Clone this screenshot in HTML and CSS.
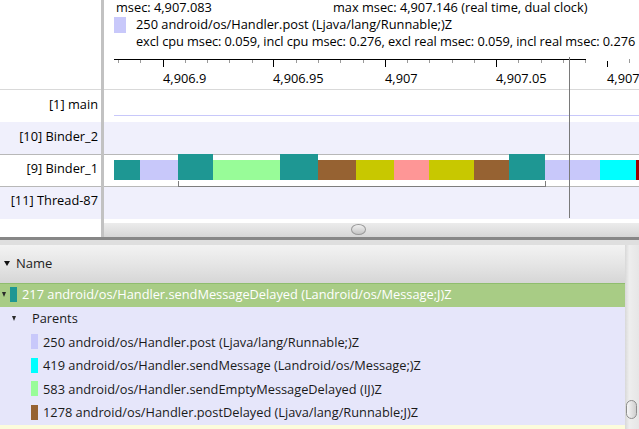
FILE: index.html
```html
<!DOCTYPE html>
<html>
<head>
<meta charset="utf-8">
<title>Traceview</title>
<link rel="stylesheet" href="styles.css">
</head>
<body>
<div class="app">
  <div class="top">
    <div class="labels">
      <div class="head"></div>
      <div class="row r1 lab">[1] main</div>
      <div class="row r2 lab">[10] Binder_2</div>
      <div class="row r3 lab">[9] Binder_1</div>
      <div class="row r4 lab">[11] Thread-87</div>
    </div>
    <div class="timeline">
      <div class="head">
        <div class="info">
          <div class="line"><span class="cur">msec: 4,907.083</span><span>max msec: 4,907.146 (real time, dual clock)</span></div>
          <div class="line"><span class="sw-big"></span><span>250 android/os/Handler.post (Ljava/lang/Runnable;)Z</span></div>
          <div class="line indent">excl cpu msec: 0.059, incl cpu msec: 0.276, excl real msec: 0.059, incl real msec: 0.276</div>
        </div>
        <svg class="axis" width="535" height="40" viewBox="0 0 535 40">
          <path class="minor" d="M14.5 8V12M36.5 8V12M81.5 8V12M103.5 8V12M125.5 8V12M148.5 8V12M192.5 8V12M214.5 8V12M236.5 8V12M259.5 8V12M303.5 8V12M325.5 8V12M348.5 8V12M370.5 8V12M414.5 8V12M437.5 8V12M459.5 8V12M481.5 8V12M525.5 8V12"/>
          <path class="major" d="M10 8.5H482M59.5 8V16M169.5 8V16M281.5 8V16M392.5 8V16M503.5 10V16"/>
          <text x="59" y="31.5">4,906.9</text>
          <text x="169" y="31.5">4,906.95</text>
          <text x="281" y="31.5">4,907</text>
          <text x="392" y="31.5">4,907.05</text>
          <text x="503" y="31.5">4,907.1</text>
        </svg>
      </div>
      <div class="row r1 track"><div class="thin"></div></div>
      <div class="row r2 track"></div>
      <div class="row r3 track">
        <div class="bars">
          <div class="bar c-teal" style="width:26px"></div>
          <div class="bar c-lav" style="width:38px"></div>
          <div class="bar c-teal tall" style="width:35px"></div>
          <div class="bar c-green" style="width:67px"></div>
          <div class="bar c-teal tall" style="width:38px"></div>
          <div class="bar c-brown" style="width:38px"></div>
          <div class="bar c-olive" style="width:38px"></div>
          <div class="bar c-pink" style="width:35px"></div>
          <div class="bar c-olive" style="width:45px"></div>
          <div class="bar c-brown" style="width:35px"></div>
          <div class="bar c-teal tall" style="width:36px"></div>
          <div class="bar c-lav" style="width:55px"></div>
          <div class="bar c-cyan" style="width:36px"></div>
          <div class="bar c-red" style="width:20px"></div>
        </div>
      </div>
      <div class="row r4 track"></div>
      <div class="gap"></div>
      <div class="hscroll"><div class="hthumb"></div></div>
      <div class="bracket"></div>
      <div class="cursor"></div>
    </div>
  </div>
  <div class="sash"></div>
  <div class="bottom">
    <div class="tree">
      <div class="colhead"><span class="tri big"></span><span>Name</span></div>
      <div class="sel"><span class="tri"></span><span class="sw c-teal"></span><span>217 android/os/Handler.sendMessageDelayed (Landroid/os/Message;J)Z</span></div>
      <div class="item parents"><span class="tri"></span><span>Parents</span></div>
      <div class="item child"><span class="sw c-lav"></span><span>250 android/os/Handler.post (Ljava/lang/Runnable;)Z</span></div>
      <div class="item child"><span class="sw c-cyan"></span><span>419 android/os/Handler.sendMessage (Landroid/os/Message;)Z</span></div>
      <div class="item child"><span class="sw c-green"></span><span>583 android/os/Handler.sendEmptyMessageDelayed (IJ)Z</span></div>
      <div class="item child"><span class="sw c-brown"></span><span>1278 android/os/Handler.postDelayed (Ljava/lang/Runnable;J)Z</span></div>
      <div class="item yellow"></div>
    </div>
    <div class="vscroll"><div class="vthumb"></div></div>
  </div>
</div>
</body>
</html>
```

FILE: styles.css
```css
html, body {
  margin: 0;
  padding: 0;
  overflow: hidden;
}
body {
  width: 639px;
  height: 429px;
  font-family: "Open Sans", "Noto Sans", sans-serif;
  font-size: 12.8px;
  color: #000;
  background: #fff;
}
.app {
  display: flex;
  flex-direction: column;
  height: 429px;
}
.top {
  display: flex;
  height: 237px;
  flex: none;
}
.labels {
  width: 101px;
  flex: none;
  border-right: 3px solid #c2c2c2;
  background: #fff;
}
.timeline {
  flex: 1;
  min-width: 0;
  position: relative;
  display: flex;
  flex-direction: column;
  overflow: hidden;
}
.head {
  height: 89px;
  border-bottom: 1px solid #d9d9d9;
  flex: none;
  display: flex;
  flex-direction: column;
}
.info {
  margin-top: -1.3px;
  padding-left: 12px;
  line-height: 17.3px;
  white-space: nowrap;
}
.line {
  display: flex;
  align-items: center;
  height: 17.3px;
}
.line .cur {
  width: 217px;
  flex: none;
}
.sw-big {
  width: 12px;
  height: 16px;
  margin-left: -2px;
  margin-right: 10px;
  background: #c8c8fa;
  flex: none;
}
.line.indent {
  padding-left: 20px;
  letter-spacing: -0.07px;
}
.axis {
  display: block;
  margin-top: auto;
  flex: none;
}
.axis .minor {
  stroke: #9a9a9a;
  stroke-width: 1;
  fill: none;
}
.axis .major {
  stroke: #000;
  stroke-width: 1;
  fill: none;
}
.axis text {
  font-family: "Open Sans", "Noto Sans", sans-serif;
  font-size: 12.8px;
  fill: #000;
}
.row {
  height: 32px;
  box-sizing: border-box;
  flex: none;
}
.r2 {
  background: #f0f0fc;
}
.r3 {
  border-top: 1px solid #b8b8b8;
}
.r4 {
  height: 33px;
  border-top: 1px solid #b8b8b8;
  background: #f0f0fc;
}
.lab {
  text-align: right;
  padding-right: 3px;
  line-height: 28px;
  white-space: nowrap;
}
.lab.r3, .lab.r4 {
  line-height: 26px;
}
.thin {
  margin: 25px 0 0 10px;
  height: 1px;
  background: #c8c8fa;
}
.bars {
  display: flex;
  align-items: flex-end;
  height: 25px;
  padding-left: 10px;
}
.bar {
  flex: none;
  height: 20px;
}
.bar.tall {
  height: 26px;
}
.c-teal { background: #1e9793; }
.c-lav { background: #c8c8fa; }
.c-green { background: #98fc98; }
.c-brown { background: #966232; }
.c-olive { background: #c8c800; }
.c-pink { background: #fe9696; }
.c-cyan { background: #00ffff; }
.c-red { background: #9c0000; }
.gap {
  height: 4px;
  flex: none;
}
.hscroll {
  height: 14px;
  flex: none;
  background: linear-gradient(#ececec, #d6d6d6);
}
.hthumb {
  margin: 1px 0 0 247px;
  width: 13px;
  height: 9px;
  border: 1px solid #999;
  border-radius: 50%;
  background: linear-gradient(#f0f0f0, #c4c4c4);
}
.bracket {
  position: absolute;
  left: 74px;
  top: 181px;
  width: 366px;
  height: 5px;
  border: 1px solid #7d7d7d;
  border-top: none;
}
.cursor {
  position: absolute;
  left: 465px;
  top: 57px;
  width: 1px;
  height: 161px;
  background: #7a7a7a;
}
.sash {
  height: 3px;
  flex: none;
  background: #878787;
}
.bottom {
  flex: 1;
  min-height: 0;
  padding-top: 5px;
  background: #dfdfdf;
  display: flex;
}
.tree {
  width: 625px;
  flex: none;
  background: #e6e6fa;
  overflow: hidden;
  white-space: nowrap;
}
.colhead {
  height: 38px;
  box-sizing: border-box;
  padding: 0 0 2px 4px;
  line-height: 36px;
  display: flex;
  align-items: center;
  color: #222;
  font-size: 13px;
  background: linear-gradient(#f3f3f3, #e4e4e4 55%, #d6d6d6);
}
.tri {
  width: 0;
  height: 0;
  border-left: 2.5px solid transparent;
  border-right: 2.5px solid transparent;
  border-top: 5px solid #2a2a2a;
  flex: none;
}
.tri.big {
  border-left-width: 3px;
  border-right-width: 3px;
  margin-right: 6px;
  border-top-color: #111;
}
.sel {
  height: 24px;
  box-sizing: border-box;
  border-top: 1px solid #8fbd6e;
  padding: 0 0 2px 2px;
  line-height: 21px;
  display: flex;
  align-items: center;
  background: #a8cc85;
  color: #fff;
}
.sel .tri {
  margin-right: 4px;
}
.sw {
  width: 7px;
  height: 15px;
  margin-right: 5px;
  flex: none;
}
.item {
  height: 23.6px;
  box-sizing: border-box;
  padding-bottom: 1.6px;
  line-height: 22px;
  display: flex;
  align-items: center;
  color: #1a1a1a;
}
.parents {
  padding-left: 12px;
}
.parents .tri {
  margin-right: 16px;
}
.child {
  padding-left: 31px;
}
.yellow {
  background: #fcfcdc;
}
.vscroll {
  flex: 1;
  background: linear-gradient(to right, #d8d8d8, #eeeeee 30%, #e6e6e6);
}
.vthumb {
  margin: 155px 0 0 1px;
  width: 9px;
  height: 17px;
  border: 1px solid #8d8d8d;
  border-radius: 6px;
  background: linear-gradient(to right, #f6f6f6, #cfcfcf);
}
```
